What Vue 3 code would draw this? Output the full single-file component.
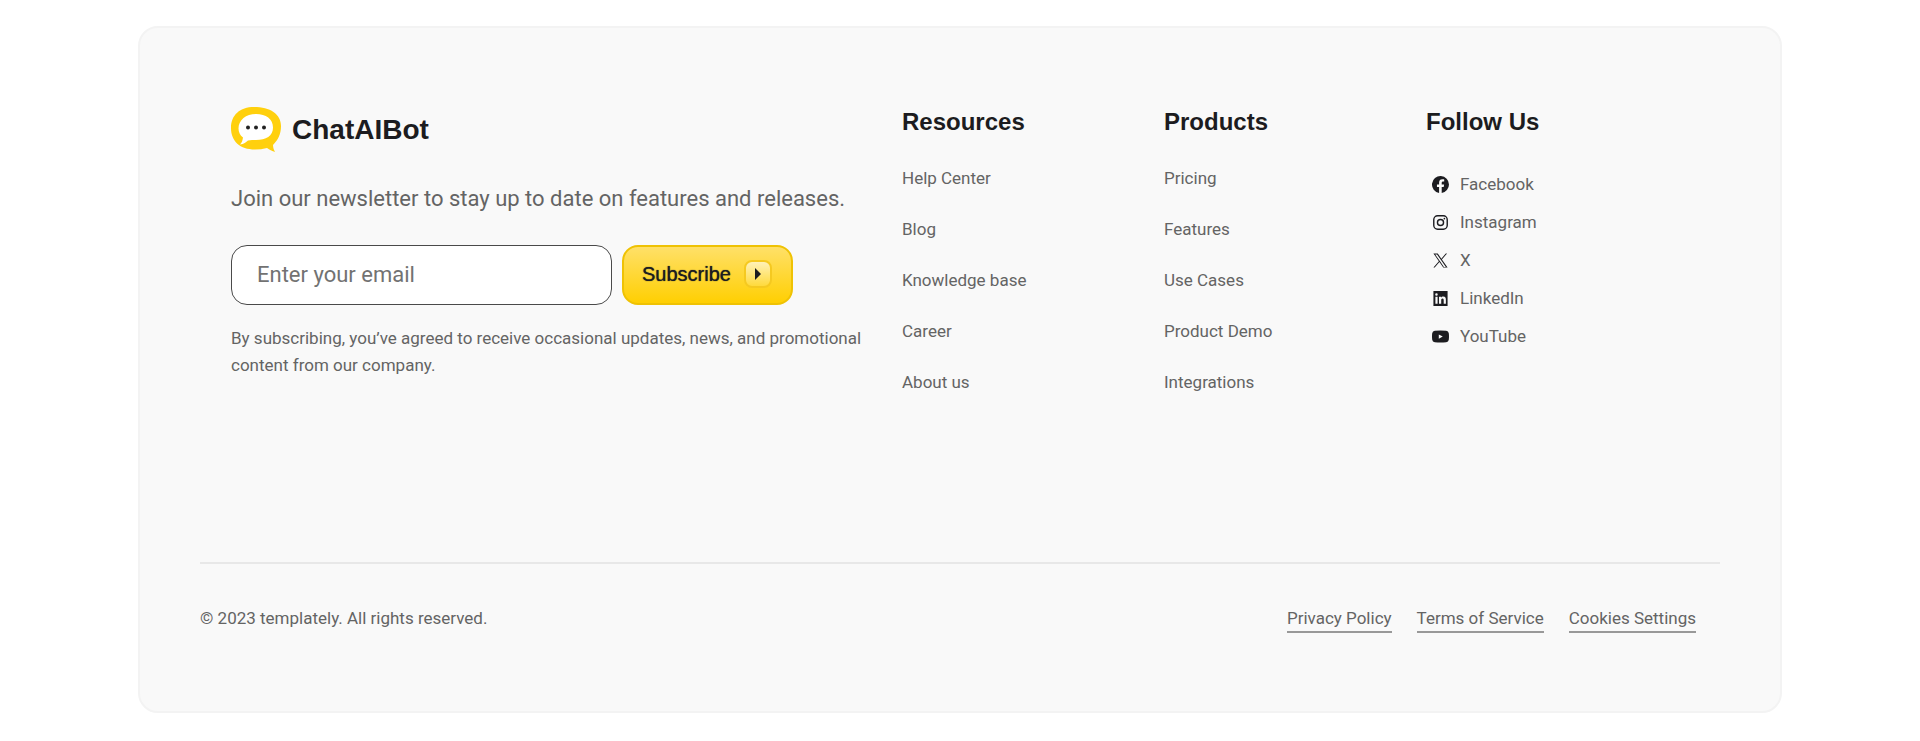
<script setup>
const columns = [
  { title: 'Resources', links: ['Help Center', 'Blog', 'Knowledge base', 'Career', 'About us'] },
  { title: 'Products', links: ['Pricing', 'Features', 'Use Cases', 'Product Demo', 'Integrations'] },
]
const socials = [
  { name: 'Facebook', path: 'M24 12a12 12 0 1 0-14 11.9v-8.4H7V12h3V9.4c0-3 1.800-4.700 4.500-4.700 1.300 0 2.700.2 2.700.2v3h-1.500c-1.500 0-2 .9-2 1.900V12h3.400l-.6 3.500h-2.800v8.400A12 12 0 0 0 24 12z' },
  { name: 'Instagram', path: 'M8 1.500h8A6.500 6.500 0 0 1 22.500 8v8a6.500 6.500 0 0 1-6.500 6.500H8A6.500 6.500 0 0 1 1.500 16V8A6.500 6.500 0 0 1 8 1.500zM8 3.500A4.500 4.500 0 0 0 3.500 8v8A4.500 4.500 0 0 0 8 20.500h8a4.500 4.500 0 0 0 4.500-4.500V8A4.500 4.500 0 0 0 16 3.500zM12 6.700a5.300 5.300 0 1 1 0 10.600 5.300 5.300 0 0 1 0-10.600zm0 2a3.300 3.300 0 1 0 0 6.600 3.300 3.300 0 0 0 0-6.600zM17.500 5.300a1.200 1.200 0 1 1 0 2.400 1.200 1.200 0 0 1 0-2.400z' },
  { name: 'X', path: 'M14 10.600 21.300 2h-1.800l-6.300 7.400L8.100 2H2l7.700 11.200L2 22h1.800l6.700-7.800 5.400 7.800H22zm-2.400 2.700-.8-1.100L4.500 3.400h2.600l5 7.200.8 1.100 6.600 9.300h-2.700z' },
  { name: 'LinkedIn', path: 'M2 1.500h20v21H2zM4.800 9.500v10h3.100v-10zm1.500-4.900a1.800 1.800 0 1 0 0 3.600 1.800 1.800 0 0 0 0-3.600zM9.900 9.500v10H13v-5c0-1.300.3-2.600 1.900-2.600s1.600 1.500 1.600 2.700v4.900h3.100V14c0-2.700-.6-4.700-3.700-4.700-1.500 0-2.500.8-2.900 1.600v-1.400z' },
  { name: 'YouTube', path: 'M4 4Q12 3 20 4q3.300.3 3.700 3.500.6 4.500 0 9-.4 3.200-3.700 3.500-8 1-16 0-3.300-.3-3.700-3.500-.6-4.500 0-9Q.7 4.300 4 4zM9.600 9v6l5.600-3z' },
]
const legal = ['Privacy Policy', 'Terms of Service', 'Cookies Settings']
</script>

<template>
  <footer class="card">
    <div class="top">
      <section class="intro">
        <a class="brand" href="#">
          <svg class="logo" viewBox="0 0 50 45" aria-hidden="true">
            <path fill="#ffd00d" d="M23 0C39 0 50 7 50 19c0 8-3 14-8 19 0 3 1 5 2 7-4-1-6-3-8-4-4 1-8 1.500-12 1.500C9 42.500 0 34 0 21 0 8 9 0 23 0z" />
            <path fill="#fff" d="M25 7c10 0 17 5 17 13.500S35 33 25 33c-3 0-5 0-8 .5-2 1.500-4 3.500-8 4 2-2 2.500-4 3-7-3-2-4.500-5.500-4.500-9C7.500 13 15 7 25 7z" />
            <circle cx="17" cy="20.500" r="2" fill="#222" />
            <circle cx="25" cy="20.500" r="2" fill="#222" />
            <circle cx="33" cy="20.500" r="2" fill="#222" />
          </svg>
          <span>ChatAIBot</span>
        </a>
        <p class="lead">Join our newsletter to stay up to date on features and releases.</p>
        <form class="signup" @submit.prevent>
          <input type="email" placeholder="Enter your email" aria-label="Enter your email" />
          <button type="submit">
            Subscribe
            <span class="go">
              <svg viewBox="0 0 8 14" aria-hidden="true"><path d="M1 1 7 7 1 13z" fill="#1c1c20" /></svg>
            </span>
          </button>
        </form>
        <p class="note">By subscribing, you’ve agreed to receive occasional updates, news, and promotional content from our company.</p>
      </section>

      <nav v-for="col in columns" :key="col.title" :aria-label="col.title">
        <h2>{{ col.title }}</h2>
        <ul class="links">
          <li v-for="link in col.links" :key="link"><a href="#">{{ link }}</a></li>
        </ul>
      </nav>

      <nav aria-label="Follow Us">
        <h2>Follow Us</h2>
        <ul class="social">
          <li v-for="s in socials" :key="s.name">
            <a href="#">
              <svg viewBox="0 0 24 24" aria-hidden="true"><path :d="s.path" fill="#1c1c20" fill-rule="evenodd" /></svg>
              {{ s.name }}
            </a>
          </li>
        </ul>
      </nav>
    </div>

    <div class="bottom">
      <p>© 2023 templately. All rights reserved.</p>
      <nav class="legal" aria-label="Legal">
        <a v-for="item in legal" :key="item" href="#">{{ item }}</a>
      </nav>
    </div>
  </footer>
</template>

<style>
body {
  background: #fff;
}
</style>

<style scoped>
* {
  box-sizing: border-box;
}
.card {
  margin: 26px 138px;
  padding: 76px 60px 78px;
  border: 2px solid #f3f3f3;
  border-radius: 20px;
  background: #f9f9f9;
  color: #646464;
  font: 17px/27px Roboto, sans-serif;
}
p,
h2,
ul {
  margin: 0;
  padding: 0;
}
ul {
  list-style: none;
}
a {
  color: inherit;
  text-decoration: none;
}
.top {
  display: grid;
  grid-template-columns: 671fr 262fr 262fr 262fr;
  padding: 0 32px 166px 31px;
  border-bottom: 2px solid #e8e8e8;
}
.intro {
  padding: 3px 20px 0 0;
}
.brand {
  display: flex;
  align-items: center;
  gap: 11px;
  color: #1c1c20;
  font: bold 28px/45px "Liberation Sans", Arial, sans-serif;
}
.logo {
  width: 50px;
  height: 45px;
}
.lead {
  margin-top: 30px;
  font-size: 22px;
  line-height: 34px;
}
.signup {
  display: flex;
  gap: 10px;
  margin-top: 29px;
}
.signup input {
  width: 381px;
  height: 60px;
  padding: 0 25px 2px;
  border: 1px solid #4a4a4a;
  border-radius: 16px;
  background: #fff;
  color: #1c1c20;
  font: 22px Roboto, sans-serif;
}
.signup input::placeholder {
  color: #727272;
}
.signup button {
  display: flex;
  align-items: center;
  gap: 13px;
  height: 60px;
  padding: 0 19px 2px 18px;
  border: 2px solid #efc204;
  border-radius: 16px;
  background: linear-gradient(#ffe068, #ffcf02);
  color: #1c1c20;
  font: 20px "Liberation Sans", Arial, sans-serif;
  text-shadow: 0 0 1px #1c1c20;
}
.go {
  display: grid;
  place-items: center;
  width: 28px;
  height: 28px;
  border: 2px solid #f5c920;
  border-radius: 8px;
  background: linear-gradient(#fff1b8, #ffda3c);
}
.go svg {
  width: 8px;
  height: 14px;
}
.note {
  margin-top: 20px;
}
h2 {
  color: #1c1c20;
  font: bold 24px/36px "Liberation Sans", Arial, sans-serif;
}
.links {
  display: grid;
  gap: 24px;
  margin-top: 25px;
}
.social {
  margin-top: 25px;
  padding-left: 6px;
}
.social a {
  display: flex;
  align-items: center;
  gap: 11px;
  line-height: 38px;
}
.social svg {
  width: 17px;
  height: 17px;
}
.bottom {
  display: flex;
  justify-content: space-between;
  padding: 41px 24px 0 0;
  line-height: 26px;
}
.legal {
  display: flex;
  gap: 25px;
}
.legal a {
  border-bottom: 2px solid #999;
}
</style>
